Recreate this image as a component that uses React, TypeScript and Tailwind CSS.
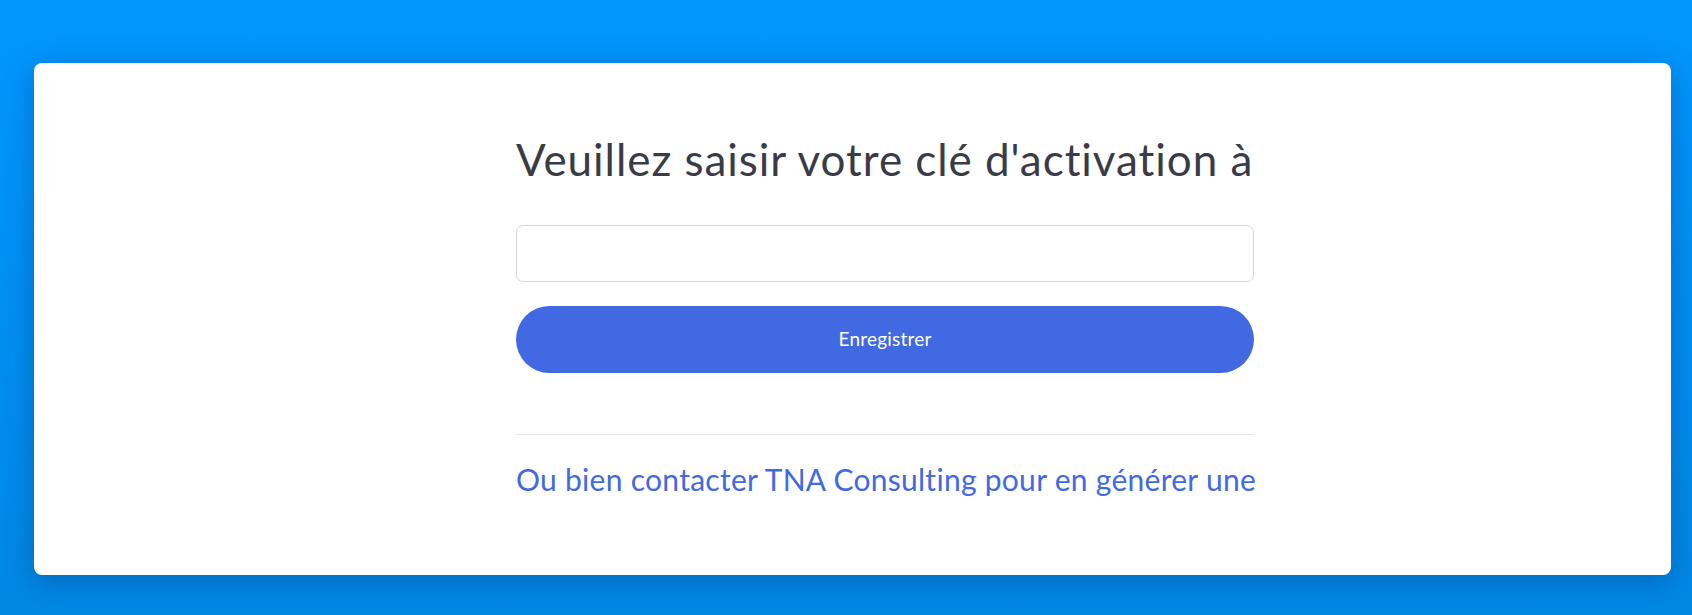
export default function App() {
  return (
    <div className="min-h-[615px] w-full bg-gradient-to-b from-[#0097ff] to-[#0087e4] pt-[63px] font-['Lato',_'Noto_Sans',_sans-serif]">
      <div className="ml-[34px] h-[512px] w-[1637px] rounded-lg bg-white shadow-[0_6px_28px_rgba(0,40,110,0.35)]">
        <div className="w-[1220px] pl-[482px] pt-[70px]">
          <h1 className="whitespace-nowrap text-[44px] leading-[53px] font-normal tracking-[0.95px] text-[#3a3b45]">
            Veuillez saisir votre clé d'activation à
          </h1>
          <input
            type="text"
            className="mt-[39px] block h-[57px] w-[738px] rounded-[7px] border border-[#d1d3e2] bg-white px-4 text-[18px] text-[#6e707e] outline-none"
          />
          <button className="mt-6 flex h-[67px] w-[738px] items-center justify-center rounded-full bg-[#4169e1] text-[19px] tracking-[0.2px] text-white">
            Enregistrer
          </button>
          <hr className="mt-[61px] w-[738px] border-0 border-t border-[#e3e6f0]" />
          <a href="#" className="mt-[26px] block whitespace-nowrap text-[30px] leading-[36px] tracking-[0.28px] text-[#4169e1]">
            Ou bien contacter TNA Consulting pour en générer une
          </a>
        </div>
      </div>
    </div>
  );
}
